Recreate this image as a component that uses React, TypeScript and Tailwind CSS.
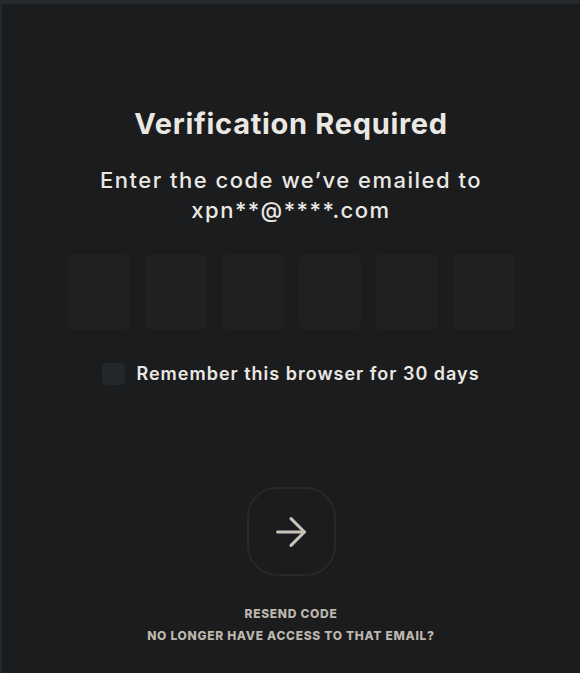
import { ArrowRight } from 'lucide-react';

const font = { fontFamily: 'Inter, "Noto Sans", sans-serif' };

export default function App() {
  const slots = [0, 1, 2, 3, 4, 5];

  return (
    <div className="w-[580px] h-[673px] bg-[#25292b] pt-[4px] pl-[2px] overflow-hidden" style={font}>
      <div className="h-full bg-[#1b1c1e] flex flex-col items-center text-[#ebe8e3]">
        <h1 className="mt-[100px] text-[29px] leading-[40px] font-bold tracking-[0.7px]">
          Verification Required
        </h1>
        <p className="mt-[21px] text-[22px] leading-[30px] font-medium text-center tracking-[1.5px]">
          Enter the code we’ve emailed to
          <br />
          xpn**@****.com
        </p>

        {/* code slots */}
        <div className="mt-[29px] flex gap-[15px]">
          {slots.map((i) => (
            <div key={i} className="w-[62px] h-[76px] rounded-[5px] bg-[#1f2022]" />
          ))}
        </div>

        <label className="mt-[32px] flex items-center gap-[11px]">
          <span className="w-[23px] h-[22px] rounded-[5px] bg-[#25282a]" />
          <span className="text-[18px] leading-[24px] font-semibold tracking-[1px]">Remember this browser for 30 days</span>
        </label>

        <button className="mt-[101px] w-[89px] h-[89px] rounded-[30px] border-2 border-[#27282a] flex items-center justify-center text-[#c9c3b9]">
          <ArrowRight size={46} strokeWidth={1.6} />
        </button>

        <div className="mt-[30px] flex flex-col items-center gap-[7px] text-[12px] leading-[15px] font-extrabold tracking-[0.7px] text-[#bdb7ae] uppercase">
          <span>Resend code</span>
          <span>No longer have access to that email?</span>
        </div>
      </div>
    </div>
  );
}
